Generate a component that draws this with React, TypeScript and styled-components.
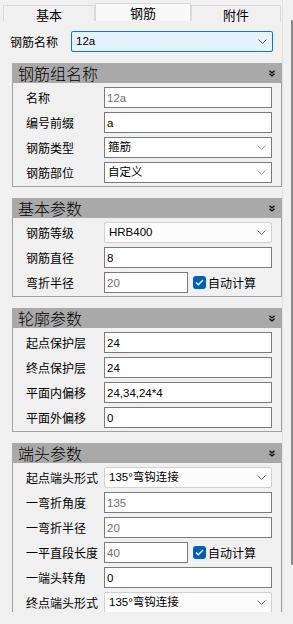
import React from 'react';
import styled, { createGlobalStyle } from 'styled-components';

const Global = createGlobalStyle`
  html, body { margin: 0; padding: 0; background: #f0f0f0; }
  body { font-family: "Noto Sans CJK SC", "Liberation Sans", sans-serif; color: #000; }
`;

const Window = styled.div`
  width: 293px;
  height: 624px;
  display: flex;
  background: #f0f0f0;
  overflow: hidden;
`;

const Main = styled.div`
  width: 282px;
  display: flex;
  flex-direction: column;
`;

const Gutter = styled.div`
  width: 11px;
  height: 612px;
  box-sizing: border-box;
  border-left: 1px solid #e2e2e2;
  display: flex;
  justify-content: flex-end;
  padding-top: 20px;
`;

const Thumb = styled.div`
  width: 2px;
  height: 545px;
  background: #8a8a8a;
  border-radius: 1px;
`;

const TabBar = styled.div`
  height: 21px;
  box-sizing: border-box;
  display: flex;
  align-items: flex-end;
  padding-left: 3px;
`;

const Tab = styled.div<{ $active?: boolean; $w: number }>`
  width: ${(p) => p.$w}px;
  height: ${(p) => (p.$active ? 18 : 16)}px;
  box-sizing: border-box;
  border: 1px solid #d9d9d9;
  border-bottom: none;
  background: ${(p) => (p.$active ? '#f9f9f9' : '#f0f0f0')};
  display: flex;
  align-items: center;
  justify-content: center;
  font-size: 13px;
  line-height: 1;
  padding-top: ${(p) => (p.$active ? 0 : 2)}px;
`;

const Scroll = styled.div`
  height: 591px;
  overflow: hidden;
  padding-top: 10px;
  box-sizing: border-box;
`;

const NameRow = styled.div`
  display: flex;
  align-items: center;
  height: 21px;
  padding-left: 10px;
`;

const NameLabel = styled.div`
  width: 61px;
  font-size: 12px;
  line-height: 1;
`;

const Section = styled.section`
  margin: 11px 0 0 12px;
  width: 270px;
`;

const Header = styled.div`
  height: 20px;
  background: #a9a9a9;
  display: flex;
  align-items: center;
  justify-content: space-between;
  padding: 0 7px 0 6px;
  font-size: 16px;
  font-weight: 300;
  line-height: 20px;
`;

const Body = styled.div`
  border: 1px solid #a0a0a0;
  border-top: none;
  padding: 4px 0 3px 13px;
  display: flex;
  flex-direction: column;
  gap: 4px;
`;

const Row = styled.div`
  display: flex;
  align-items: center;
  height: 21px;
`;

const Label = styled.div`
  width: 78px;
  font-size: 12px;
  line-height: 1;
  white-space: nowrap;
`;

const Input = styled.input<{ $short?: boolean; $dim?: boolean }>`
  width: ${(p) => (p.$short ? 84 : 168)}px;
  height: 21px;
  box-sizing: border-box;
  border: 1px solid #7a7a7a;
  background: #fff;
  padding: 0 2px;
  margin: 0;
  font-family: "Liberation Sans", "Noto Sans CJK SC", sans-serif;
  font-size: 11.5px;
  color: ${(p) => (p.$dim ? '#6d6d6d' : '#000')};
  outline: none;
`;

const SelectBox = styled.div<{ $variant: 'focus' | 'edit' | 'list' }>`
  width: ${(p) => (p.$variant === 'focus' ? 202 : 168)}px;
  height: 21px;
  box-sizing: border-box;
  border: 1px solid
    ${(p) => (p.$variant === 'focus' ? '#0078d4' : p.$variant === 'edit' ? '#7a7a7a' : '#d0d0d0')};
  background: ${(p) => (p.$variant === 'focus' ? '#e5f1fb' : p.$variant === 'edit' ? '#fff' : '#fcfcfc')};
  border-radius: ${(p) => (p.$variant === 'edit' ? 0 : 2)}px;
  display: flex;
  align-items: center;
  justify-content: space-between;
  padding: 0 5px 0 ${(p) => (p.$variant === 'edit' ? 3 : 4)}px;
  font-family: "Liberation Sans", "Noto Sans CJK SC", sans-serif;
  font-size: 11.5px;
  line-height: 1;
`;

const SelectText = styled.span`
  white-space: nowrap;
`;

const CheckWrap = styled.label`
  display: flex;
  align-items: center;
  margin-left: 5px;
  font-size: 12px;
  line-height: 1;
  gap: 2px;
`;

const CheckBox = styled.span`
  width: 13px;
  height: 13px;
  border-radius: 3px;
  background: #005fb8;
  display: flex;
  align-items: center;
  justify-content: center;
`;

const Chevron = ({ light }: { light?: boolean }) => (
  <svg width="9" height="5" viewBox="0 0 9 5">
    <polyline points="0.5,0.5 4.5,4.5 8.5,0.5" fill="none" stroke={light ? '#9a9a9a' : '#606060'} strokeWidth="1" />
  </svg>
);

const Collapse = () => (
  <svg width="6" height="7" viewBox="0 0 6 7">
    <polyline points="0.5,0.8 3,3 5.5,0.8" fill="none" stroke="#000" strokeWidth="1.3" />
    <polyline points="0.5,3.8 3,6 5.5,3.8" fill="none" stroke="#000" strokeWidth="1.3" />
  </svg>
);

const Check = () => (
  <CheckBox>
    <svg width="9" height="7" viewBox="0 0 9 7">
      <polyline points="1,3.5 3.3,5.8 8,1" fill="none" stroke="#fff" strokeWidth="1.3" />
    </svg>
  </CheckBox>
);

type Field =
  | { kind: 'input'; label: string; value: string; dim?: boolean; auto?: boolean }
  | { kind: 'select'; label: string; value: string; variant: 'edit' | 'list' };

const sections: { title: string; fields: Field[] }[] = [
  {
    title: '钢筋组名称',
    fields: [
      { kind: 'input', label: '名称', value: '12a', dim: true },
      { kind: 'input', label: '编号前缀', value: 'a' },
      { kind: 'select', label: '钢筋类型', value: '箍筋', variant: 'edit' },
      { kind: 'select', label: '钢筋部位', value: '自定义', variant: 'edit' },
    ],
  },
  {
    title: '基本参数',
    fields: [
      { kind: 'select', label: '钢筋等级', value: 'HRB400', variant: 'list' },
      { kind: 'input', label: '钢筋直径', value: '8' },
      { kind: 'input', label: '弯折半径', value: '20', dim: true, auto: true },
    ],
  },
  {
    title: '轮廓参数',
    fields: [
      { kind: 'input', label: '起点保护层', value: '24' },
      { kind: 'input', label: '终点保护层', value: '24' },
      { kind: 'input', label: '平面内偏移', value: '24,34,24*4' },
      { kind: 'input', label: '平面外偏移', value: '0' },
    ],
  },
  {
    title: '端头参数',
    fields: [
      { kind: 'select', label: '起点端头形式', value: '135°弯钩连接', variant: 'list' },
      { kind: 'input', label: '一弯折角度', value: '135', dim: true },
      { kind: 'input', label: '一弯折半径', value: '20', dim: true },
      { kind: 'input', label: '一平直段长度', value: '40', dim: true, auto: true },
      { kind: 'input', label: '一端头转角', value: '0' },
      { kind: 'select', label: '终点端头形式', value: '135°弯钩连接', variant: 'list' },
    ],
  },
];

export default function App() {
  return (
    <>
      <Global />
      <Window>
        <Main>
          <TabBar>
            <Tab $w={92}>基本</Tab>
            <Tab $w={96} $active>钢筋</Tab>
            <Tab $w={90}>附件</Tab>
          </TabBar>
          <Scroll>
            <NameRow>
              <NameLabel>钢筋名称</NameLabel>
              <SelectBox $variant="focus">
                <SelectText>12a</SelectText>
                <Chevron />
              </SelectBox>
            </NameRow>
            {sections.map((s) => (
              <Section key={s.title}>
                <Header>
                  <span>{s.title}</span>
                  <Collapse />
                </Header>
                <Body>
                  {s.fields.map((f) => (
                    <Row key={f.label}>
                      <Label>{f.label}</Label>
                      {f.kind === 'input' ? (
                        <>
                          <Input readOnly defaultValue={f.value} $dim={f.dim} $short={f.auto} />
                          {f.auto && (
                            <CheckWrap>
                              <Check />
                              自动计算
                            </CheckWrap>
                          )}
                        </>
                      ) : (
                        <SelectBox $variant={f.variant}>
                          <SelectText>{f.value}</SelectText>
                          <Chevron light={f.variant === 'edit'} />
                        </SelectBox>
                      )}
                    </Row>
                  ))}
                </Body>
              </Section>
            ))}
          </Scroll>
        </Main>
        <Gutter>
          <Thumb />
        </Gutter>
      </Window>
    </>
  );
}
